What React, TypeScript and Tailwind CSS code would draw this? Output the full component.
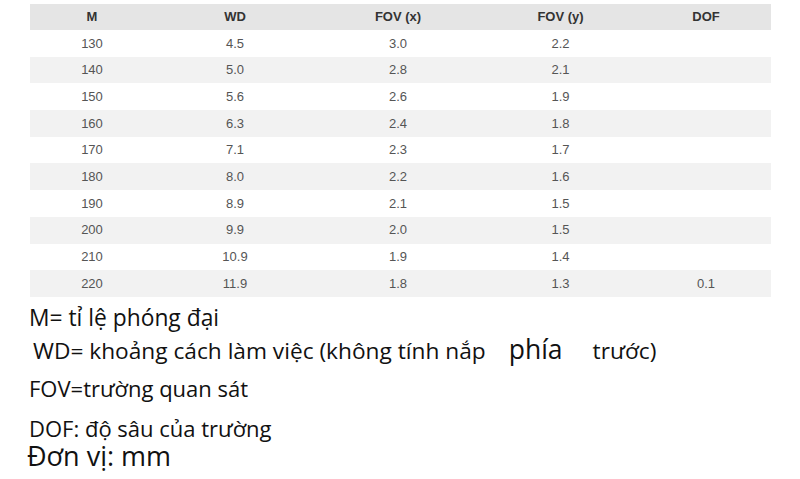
import React from "react";

const rows: [string, string, string, string, string][] = [
  ["130", "4.5", "3.0", "2.2", ""],
  ["140", "5.0", "2.8", "2.1", ""],
  ["150", "5.6", "2.6", "1.9", ""],
  ["160", "6.3", "2.4", "1.8", ""],
  ["170", "7.1", "2.3", "1.7", ""],
  ["180", "8.0", "2.2", "1.6", ""],
  ["190", "8.9", "2.1", "1.5", ""],
  ["200", "9.9", "2.0", "1.5", ""],
  ["210", "10.9", "1.9", "1.4", ""],
  ["220", "11.9", "1.8", "1.3", "0.1"],
];

const headers = ["M", "WD", "FOV (x)", "FOV (y)", "DOF"];

export default function App() {
  return (
    <div className="w-[800px] h-[479px] bg-white overflow-hidden">
      <div className="pt-[4px] pl-[30px]">
        <div className="w-[741px] font-['Liberation_Sans',Arial,sans-serif] text-[13px]">
          <div className="grid grid-cols-[124px_162px_164px_161px_130px] h-[26px] bg-[#e5e5e5] items-center font-bold text-[#333]">
            {headers.map((h) => (
              <div key={h} className="text-center">
                {h}
              </div>
            ))}
          </div>
          {rows.map((r, i) => (
            <div
              key={r[0]}
              className={
                "grid grid-cols-[124px_162px_164px_161px_130px] h-[26.7px] items-center text-[#555] " +
                (i % 2 === 1 ? "bg-[#f2f2f2]" : "bg-white")
              }
            >
              {r.map((c, j) => (
                <div key={j} className="text-center">
                  {c}
                </div>
              ))}
            </div>
          ))}
        </div>
      </div>
      <div className="font-['Open_Sans','Noto_Sans',sans-serif] text-[22px] text-[#111]">
        <div className="mt-[6.5px] h-[30px] leading-[30px] pl-[29px] text-[22.8px] whitespace-nowrap">
          M= tỉ lệ phóng đại
        </div>
        <div className="mt-[3px] h-[30px] leading-[30px] pl-[33px] text-[22.7px] whitespace-nowrap">
          WD= khoảng cách làm việc (không tính nắp
          <span className="ml-[23px] text-[26.5px] leading-[0px]">phía</span>
          <span className="ml-[30px]">trước)</span>
        </div>
        <div className="mt-[7px] h-[30px] leading-[30px] pl-[29px] whitespace-nowrap">
          FOV=trường quan sát
        </div>
        <div className="mt-[10px] h-[30px] leading-[30px] pl-[29px] whitespace-nowrap">
          DOF: độ sâu của trường
        </div>
        <div className="h-[26px] leading-[26px] pl-[27px] text-[27px] whitespace-nowrap">
          Đơn vị: mm
        </div>
      </div>
    </div>
  );
}
